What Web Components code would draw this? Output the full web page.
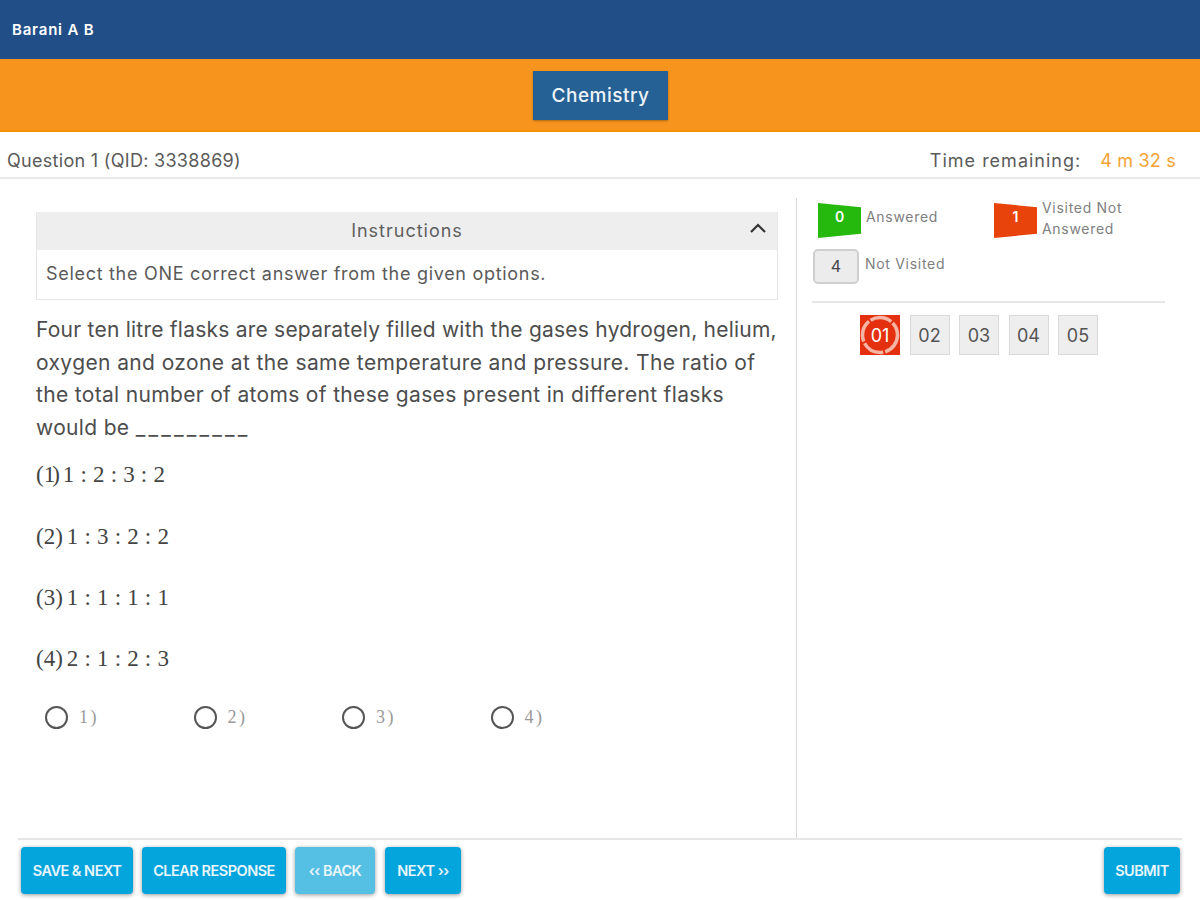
<!DOCTYPE html>
<html>
<head>
<meta charset="utf-8">
<title>Exam</title>
<style>
  html, body { margin: 0; padding: 0; background: #fff; }
  body { font-family: "Inter", "Liberation Sans", sans-serif; color: #4a4a4a; }
</style>
</head>
<body>
<exam-app></exam-app>
<script>
// Small helper so every element gets its shadow root the same way
class Base extends HTMLElement {
  constructor() {
    super();
    this.attachShadow({ mode: 'open' });
    this.shadowRoot.innerHTML = this.markup();
  }
  markup() { return ''; }
}

class ExamHeader extends Base {
  markup() {
    return `
    <style>
      :host { display: block; }
      .user { height: 59px; background: #224e88; display: flex; align-items: center; padding-left: 12px; box-sizing: border-box; color: #fff; font-size: 15px; font-weight: 600; letter-spacing: 0.8px; }
      .subjects { height: 73px; background: #f7941d; border-bottom: 2px solid #f29000; box-sizing: border-box; display: flex; justify-content: center; align-items: flex-start; padding: 12px 0 0 1px; }
      .tab { width: 135px; height: 49px; background: #256195; color: #eef3f7; font-size: 19px; font-weight: 500; letter-spacing: 0.5px; display: flex; align-items: center; justify-content: center; box-shadow: 0 1px 2px rgba(0,0,0,.3); }
    </style>
    <div class="user">Barani A B</div>
    <div class="subjects"><div class="tab">Chemistry</div></div>`;
  }
}

class QuestionBar extends Base {
  markup() {
    return `
    <style>
      :host { display: flex; justify-content: space-between; align-items: center; height: 47px; box-sizing: border-box; border-bottom: 2px solid #eaeaea; padding: 11px 24px 0 7px; font-size: 18px; color: #5a5a5a; }
      .q { letter-spacing: 0.3px; }
      .time { display: flex; gap: 19px; }
      .label { letter-spacing: 1px; }
      .left { color: #f3a333; letter-spacing: 0.2px; }
    </style>
    <span class="q">Question 1 (QID: 3338869)</span>
    <span class="time"><span class="label">Time remaining:</span><span class="left">4 m 32 s</span></span>`;
  }
}

class InstructionBox extends Base {
  markup() {
    return `
    <style>
      :host { display: block; border: 1px solid #e6e6e6; border-top: 0; height: 88px; box-sizing: border-box; }
      .head { height: 38px; background: #eeeeee; display: flex; align-items: center; justify-content: center; position: relative; font-size: 18px; letter-spacing: 1px; color: #5f5f5f; padding-bottom: 1px; box-sizing: border-box; }
      .head svg { position: absolute; right: 10px; top: 10px; }
      .body { padding: 13px 9px 0; font-size: 18px; letter-spacing: 0.7px; color: #5a5a5a; }
    </style>
    <div class="head">Instructions
      <svg width="18" height="12" viewBox="0 0 18 12"><path d="M2 10 L9 3 L16 10" fill="none" stroke="#333" stroke-width="2.2"/></svg>
    </div>
    <div class="body">Select the ONE correct answer from the given options.</div>`;
  }
}

class MathOption extends Base {
  markup() {
    const n = this.getAttribute('n');
    return `
    <style>
      :host { display: block; height: 61.3px; font-family: "Liberation Serif", serif; font-size: 23px; color: #444; line-height: 30px; }
      .r { margin-left: ${n === '1' ? 3 : 4}px; letter-spacing: 0.2px; }
      .one { letter-spacing: -3px; }
    </style>
    <span>(<span class="${n === '1' ? 'one' : ''}">${n}</span>)</span><span class="r"><slot></slot></span>`;
  }
}

class RadioItem extends Base {
  markup() {
    return `
    <style>
      :host { display: flex; align-items: center; width: 148.5px; font-family: "Liberation Serif", serif; font-size: 18px; letter-spacing: 2.5px; color: #999; }
      .c { width: 19px; height: 19px; border: 2px solid #555; border-radius: 50%; margin-right: 11px; }
    </style>
    <span class="c"></span><span><slot></slot></span>`;
  }
}

class QuestionPane extends Base {
  markup() {
    return `
    <style>
      :host { display: block; width: 796px; box-sizing: border-box; padding: 33px 18px 0 36px; }
      p { margin: 14px 0 0; font-size: 21px; line-height: 32.7px; letter-spacing: 0.33px; color: #4d4d4d; white-space: nowrap; }
      .l1 { letter-spacing: 0.23px; }
      .l2 { letter-spacing: 0.39px; }
      .blank { letter-spacing: 3.2px; }
      .opts { margin-top: 15.5px; }
      .radios { display: flex; padding-left: 9px; margin-top: 0.5px; }
    </style>
    <instruction-box></instruction-box>
    <p><span class="l1">Four ten litre flasks are separately filled with the gases hydrogen, helium,</span><br><span class="l2">oxygen and ozone at the same temperature and pressure. The ratio of</span><br>the total number of atoms of these gases present in different flasks<br>would be <span class="blank">_________</span></p>
    <div class="opts">
      <math-option n="1">1 : 2 : 3 : 2</math-option>
      <math-option n="2">1 : 3 : 2 : 2</math-option>
      <math-option n="3">1 : 1 : 1 : 1</math-option>
      <math-option n="4">2 : 1 : 2 : 3</math-option>
    </div>
    <div class="radios">
      <radio-item>1)</radio-item>
      <radio-item>2)</radio-item>
      <radio-item>3)</radio-item>
      <radio-item>4)</radio-item>
    </div>`;
  }
}

class LegendItem extends Base {
  markup() {
    const kind = this.getAttribute('kind');
    const top = { answered: 8, visited: -1, none: 4 }[kind];
    return `
    <style>
      :host { display: flex; align-items: flex-start; font-size: 14px; letter-spacing: 0.7px; color: #808080; line-height: 21px; }
      .b { display: flex; justify-content: center; box-sizing: border-box; font-weight: 600; color: #fff; flex: none; letter-spacing: 0; }
      .answered, .visited { width: 43px; height: 35px; margin: 5px 5px 0 6px; padding-top: 3px; font-size: 14px; clip-path: polygon(0 0, 100% 12%, 100% 88%, 0 100%); }
      .answered { background: #25b90e; }
      .visited { background: #e8430a; }
      .none { width: 46px; height: 35px; margin: 0 6px 0 1px; align-items: center; background: #ececec; border: 2px solid #cfcfcf; border-radius: 5px; color: #444; font-weight: 400; font-size: 16px; }
      .t { margin-top: ${top}px; }
    </style>
    <span class="b ${kind}"><slot></slot></span>
    <span class="t">${this.getAttribute('label')}</span>`;
  }
}

class PaletteBtn extends Base {
  markup() {
    const cur = this.hasAttribute('current');
    return `
    <style>
      :host { display: flex; align-items: center; justify-content: center; width: 40px; height: 40px; box-sizing: border-box; background: #eeeeee; border: 1px solid #d9d9d9; font-size: 18px; color: #555; position: relative; }
      :host([current]) { background: #e5300f; border-color: #e5300f; color: #fff; }
      svg { position: absolute; inset: -1px; }
      .lbl { position: relative; }
    </style>
    ${cur ? '<svg width="40" height="40" viewBox="0 0 40 40"><circle cx="20" cy="20" r="17.5" fill="none" stroke="#f6b4a4" stroke-width="3.5" stroke-dasharray="22 2"/></svg>' : ''}<span class="lbl"><slot></slot></span>`;
  }
}

class SidePane extends Base {
  markup() {
    return `
    <style>
      :host { display: block; flex: 1; margin: 19px 0 0; border-left: 1px solid #d8d8d8; padding: 0 35px 0 15px; }
      .row { display: flex; }
      .a { width: 176px; }
      .row2 { margin-top: 10px; }
      .rule { height: 2px; background: #e6e6e6; margin-top: 17px; }
      .pal { display: flex; gap: 9.5px; margin: 12px 0 0 48px; }
    </style>
    <div class="row">
      <legend-item class="a" kind="answered" label="Answered">0</legend-item>
      <legend-item kind="visited" label="Visited Not<br>Answered">1</legend-item>
    </div>
    <div class="row row2"><legend-item kind="none" label="Not Visited">4</legend-item></div>
    <div class="rule"></div>
    <div class="pal">
      <palette-btn current>01</palette-btn>
      <palette-btn>02</palette-btn>
      <palette-btn>03</palette-btn>
      <palette-btn>04</palette-btn>
      <palette-btn>05</palette-btn>
    </div>`;
  }
}

class ActionBtn extends Base {
  markup() {
    return `
    <style>
      :host { display: flex; align-items: center; justify-content: center; height: 47px; box-sizing: border-box; background: #04a4dc; color: #e8f6fc; border-radius: 4px; font-size: 14.5px; font-weight: 600; letter-spacing: -0.5px; box-shadow: 0 1px 4px rgba(0,0,0,.4); }
      :host([disabled]) { background: #56bfe4; }
    </style>
    <slot></slot>`;
  }
}

class ActionBar extends Base {
  markup() {
    return `
    <style>
      :host { display: flex; gap: 9px; margin: 0 18px; height: 62px; box-sizing: border-box; border-top: 2px solid #e6e6e6; padding: 7px 2px 0 3px; }
      .s { margin-left: auto; }
    </style>
    <action-btn style="width:112px">SAVE &amp; NEXT</action-btn>
    <action-btn style="width:144px">CLEAR RESPONSE</action-btn>
    <action-btn style="width:80px;margin-right:1px" disabled>&lsaquo;&lsaquo; BACK</action-btn>
    <action-btn style="width:76px">NEXT &rsaquo;&rsaquo;</action-btn>
    <action-btn class="s" style="width:76px">SUBMIT</action-btn>`;
  }
}

class ExamApp extends Base {
  markup() {
    return `
    <style>
      :host { display: flex; flex-direction: column; width: 1200px; height: 900px; overflow: hidden; }
      .main { flex: 1; display: flex; min-height: 0; }
    </style>
    <exam-header></exam-header>
    <question-bar></question-bar>
    <div class="main"><question-pane></question-pane><side-pane></side-pane></div>
    <action-bar></action-bar>`;
  }
}

customElements.define('exam-header', ExamHeader);
customElements.define('question-bar', QuestionBar);
customElements.define('instruction-box', InstructionBox);
customElements.define('math-option', MathOption);
customElements.define('radio-item', RadioItem);
customElements.define('question-pane', QuestionPane);
customElements.define('legend-item', LegendItem);
customElements.define('palette-btn', PaletteBtn);
customElements.define('side-pane', SidePane);
customElements.define('action-btn', ActionBtn);
customElements.define('action-bar', ActionBar);
customElements.define('exam-app', ExamApp);
</script>
</body>
</html>
